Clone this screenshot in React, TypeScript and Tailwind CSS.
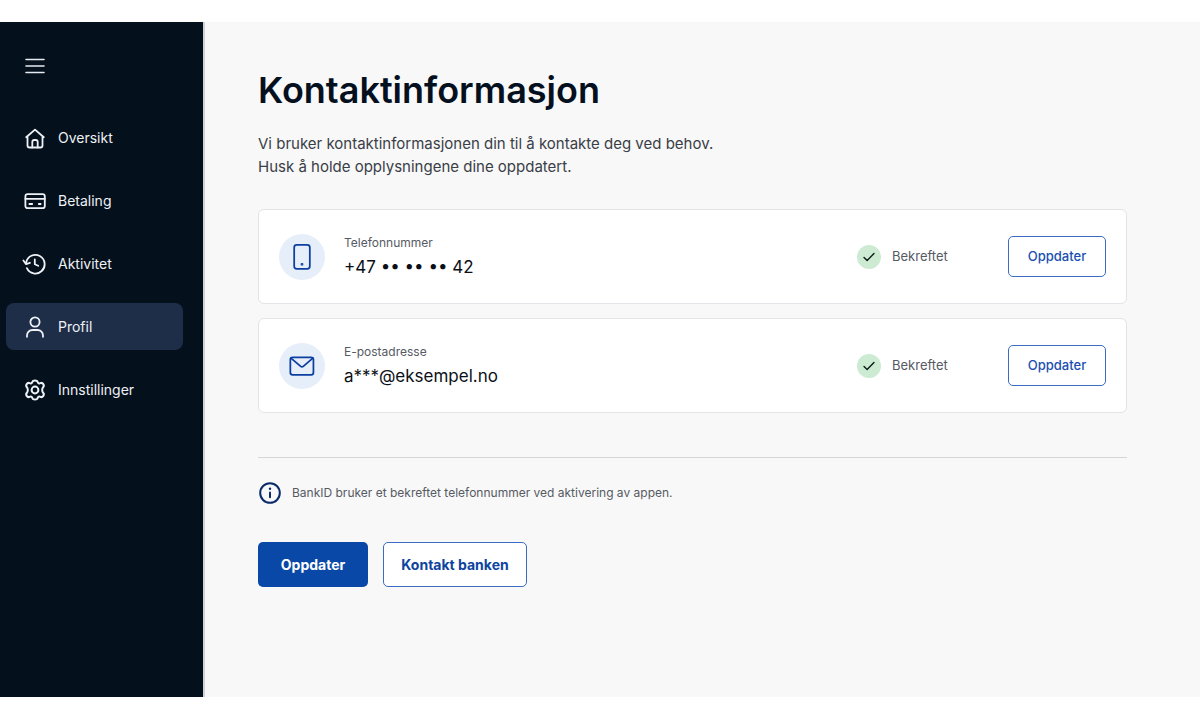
import React from 'react';

interface IconProps {
  className?: string;
  strokeWidth?: number;
  children?: React.ReactNode;
}

const Icon: React.FC<IconProps> = ({ className = 'size-6', strokeWidth = 1.8, children }) => (
  <svg
    className={`shrink-0 overflow-visible ${className}`}
    viewBox="0 0 24 24"
    fill="none"
    stroke="currentColor"
    strokeWidth={strokeWidth}
    strokeLinecap="round"
    strokeLinejoin="round"
    aria-hidden="true"
  >
    {children}
  </svg>
);

interface NavItem {
  label: string;
  icon: React.ReactNode;
  active?: boolean;
}

const navItems: NavItem[] = [
  {
    label: 'Oversikt',
    icon: (
      <Icon>
        <path d="M3.2 11.2 12 3.6l8.800 7.600M4.500 10.200v9.300a2 2 0 0 0 2 2h11a2 2 0 0 0 2-2v-9.300" />
        <path d="M9.300 21.400v-5.400a2 2 0 0 1 2-2h1.400a2 2 0 0 1 2 2v5.400" />
      </Icon>
    ),
  },
  {
    label: 'Betaling',
    icon: (
      <Icon>
        <rect x="2.4" y="5.2" width="19.400" height="14" rx="2.200" />
        <path d="M2.400 9.800h19.400M6.400 15h2.800M15.800 15h1.800" />
      </Icon>
    ),
  },
  {
    label: 'Aktivitet',
    icon: (
      <Icon>
        <path d="M3.200 10.500a9.300 9.300 0 1 1 .7 5.600" />
        <path d="M.4 8.500l2.700 3.600 3.800-1.300M11.800 7.400v4.900l3.400 1.500" />
      </Icon>
    ),
  },
  {
    label: 'Profil',
    active: true,
    icon: (
      <Icon>
        <circle cx="12" cy="7" r="4.600" />
        <path d="M4 21.800v-1.400a5.400 5.400 0 0 1 5.400-5.400h5.200a5.400 5.400 0 0 1 5.400 5.400v1.400" />
      </Icon>
    ),
  },
  {
    label: 'Innstillinger',
    icon: (
      <Icon strokeWidth={2}>
        <path d="M9.300 4.100C9.600 2.900 10.600 2.400 12 2.400s2.400.5 2.700 1.700c.3 1.200 1.500 1.700 2.600 1.100 1.100-.6 2.200-.3 3 .9s.7 2.300-.2 3.200c-.9.9-.9 1.900-.9 2.700s0 1.800.9 2.700 1 2 .2 3.200-1.900 1.500-3 .9-2.300-.1-2.600 1.100-1.300 1.700-2.700 1.700-2.400-.5-2.700-1.700-1.500-1.700-2.600-1.100-2.200.3-3-.9-.7-2.300.2-3.200.9-1.900.9-2.700 0-1.800-.9-2.700-1-2-.2-3.200 1.900-1.500 3-.9 2.300.1 2.600-1.100z" />
        <circle cx="12" cy="12" r="3.400" />
      </Icon>
    ),
  },
];

interface Contact {
  label: string;
  value: string;
  icon: React.ReactNode;
}

const contacts: Contact[] = [
  {
    label: 'Telefonnummer',
    value: '+47 •• •• •• 42',
    icon: (
      <Icon className="size-7" strokeWidth={1.5}>
        <rect x="5.300" y="1.600" width="13.400" height="20.600" rx="2.200" />
        <circle cx="12" cy="18.300" r=".5" />
      </Icon>
    ),
  },
  {
    label: 'E-postadresse',
    value: 'a***@eksempel.no',
    icon: (
      <Icon className="size-7" strokeWidth={1.5}>
        <rect x="2" y="4.500" width="19.800" height="15" rx="2" />
        <path d="m2.500 5.200 8.400 7.100a1.700 1.700 0 0 0 2.200 0l8.200-7.100" />
      </Icon>
    ),
  },
];

const Sidebar: React.FC = () => (
  <aside className="w-[205px] shrink-0 bg-[#04101c] border-r-2 border-[#cfd2da] pl-1.5 pr-5 pt-8">
    <button type="button" aria-label="Meny" className="block ml-[17px] text-[#e6ebf2]">
      <Icon strokeWidth={1.6}>
        <path d="M3 5.500h18M3 12h18M3 18.500h18" />
      </Icon>
    </button>
    <nav className="mt-9 flex flex-col gap-4">
      {navItems.map((item) => (
        <a
          key={item.label}
          href="#"
          aria-current={item.active ? 'page' : undefined}
          className={`flex items-center h-[47px] gap-[11px] pl-[17px] rounded-lg text-sm text-[#eef1f5] ${
            item.active ? 'bg-[#1f2e48]' : ''
          }`}
        >
          {item.icon}
          {item.label}
        </a>
      ))}
    </nav>
  </aside>
);

const ContactCard: React.FC<Contact> = ({ label, value, icon }) => (
  <li className="flex items-center h-[95px] px-5 bg-white border border-[#e3e4e7] rounded-md">
    <span className="flex items-center justify-center size-[46px] rounded-full bg-[#e6eefa] text-[#0c3fa0]">
      {icon}
    </span>
    <div className="ml-[19px] flex-1">
      <div className="text-xs leading-5 text-[#565a63]">{label}</div>
      <div className="text-[17px] leading-7 text-[#0b0f16]">{value}</div>
    </div>
    <div className="flex items-center w-[151px] gap-[11px] text-[13px] text-[#565a63]">
      <span className="flex items-center justify-center size-6 rounded-full bg-[#cdead2] text-[#0b1a17]">
        <Icon className="size-3.5" strokeWidth={2.4}>
          <path d="m3.500 13 5.300 5L20.500 6.200" />
        </Icon>
      </span>
      Bekreftet
    </div>
    <button
      type="button"
      className="w-[98px] h-[41px] rounded-[5px] border border-[#3a6cc4] bg-white text-[13px] font-medium text-[#1a4fb0]"
    >
      Oppdater
    </button>
  </li>
);

export default function App() {
  return (
    <div className="flex min-h-screen bg-white pt-[22px] pb-[23px] font-['Inter',sans-serif]">
      <Sidebar />
      <main className="flex-1 bg-[#f8f8f8] pl-[53px] pr-[73px] pt-11">
        <h1 className="text-4xl leading-[48px] font-semibold text-[#04101e]">Kontaktinformasjon</h1>
        <p className="mt-[18px] text-[15px] leading-[23px] text-[#3a3e46]">
          Vi bruker kontaktinformasjonen din til å kontakte deg ved behov.
          <br />
          Husk å holde opplysningene dine oppdatert.
        </p>

        <ul className="mt-[31px] flex flex-col gap-3.5">
          {contacts.map((contact) => (
            <ContactCard key={contact.label} {...contact} />
          ))}
        </ul>

        <hr className="mt-11 border-[#d6d7da]" />

        <div className="mt-[23px] flex items-center gap-2.5 text-xs text-[#565a63]">
          <Icon className="size-6 text-[#0b2a6b]" strokeWidth={2}>
            <circle cx="12" cy="12" r="9.800" />
            <path d="M12 11.500v4.700" />
            <path d="M12 7.700v.1" strokeWidth={2.4} />
          </Icon>
          BankID bruker et bekreftet telefonnummer ved aktivering av appen.
        </div>

        <div className="mt-[37px] flex gap-[15px] text-sm font-bold">
          <button type="button" className="w-[110px] h-[45px] rounded-[5px] bg-[#0a48a8] text-white">
            Oppdater
          </button>
          <button
            type="button"
            className="w-36 h-[45px] rounded-[5px] border border-[#3a6cc4] bg-white text-[#0d449f]"
          >
            Kontakt banken
          </button>
        </div>
      </main>
    </div>
  );
}
